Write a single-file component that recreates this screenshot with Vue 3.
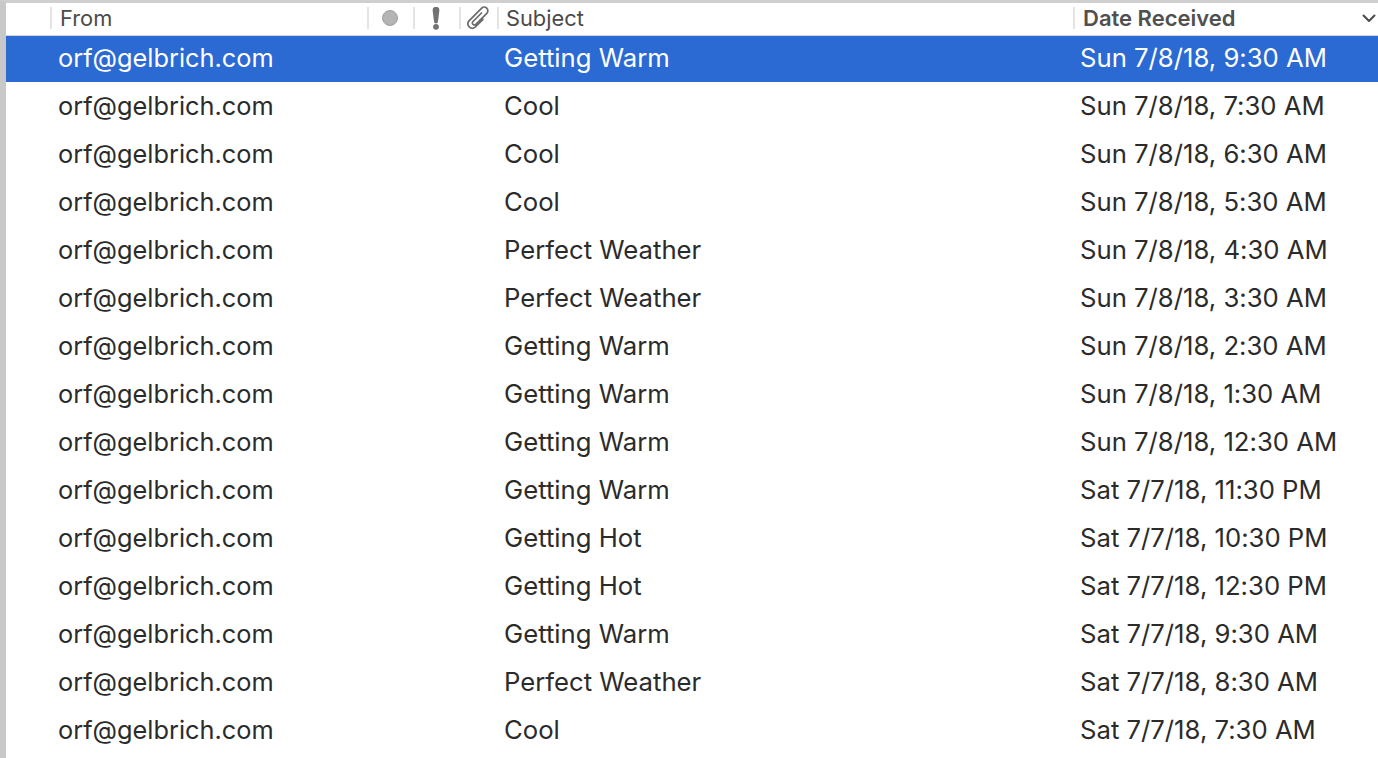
<script setup>
const rows = [
  ['Getting Warm', 'Sun 7/8/18, 9:30 AM'],
  ['Cool', 'Sun 7/8/18, 7:30 AM'],
  ['Cool', 'Sun 7/8/18, 6:30 AM'],
  ['Cool', 'Sun 7/8/18, 5:30 AM'],
  ['Perfect Weather', 'Sun 7/8/18, 4:30 AM'],
  ['Perfect Weather', 'Sun 7/8/18, 3:30 AM'],
  ['Getting Warm', 'Sun 7/8/18, 2:30 AM'],
  ['Getting Warm', 'Sun 7/8/18, 1:30 AM'],
  ['Getting Warm', 'Sun 7/8/18, 12:30 AM'],
  ['Getting Warm', 'Sat 7/7/18, 11:30 PM'],
  ['Getting Hot', 'Sat 7/7/18, 10:30 PM'],
  ['Getting Hot', 'Sat 7/7/18, 12:30 PM'],
  ['Getting Warm', 'Sat 7/7/18, 9:30 AM'],
  ['Perfect Weather', 'Sat 7/7/18, 8:30 AM'],
  ['Cool', 'Sat 7/7/18, 7:30 AM'],
];
</script>

<template>
  <div class="window">
    <div class="list">
      <div class="header">
        <div class="head-cell head-from">From</div>
        <div class="head-cell head-icon"><span class="dot"></span></div>
        <div class="head-cell head-icon head-flag">
          <svg width="10" height="23" viewBox="0 0 10 23">
            <path d="M1.600 3.200a3.400 3.400 0 0 1 6.800 0L7 14.400a2 2 0 0 1-4 0z" fill="#727272" />
            <circle cx="5" cy="19.800" r="2.900" fill="#727272" />
          </svg>
        </div>
        <div class="head-cell head-icon head-clip">
          <svg width="24" height="24" viewBox="0 0 24 24" fill="none" stroke="#6c6c6c" stroke-width="1.700" stroke-linecap="round">
            <path d="M15.500 7 6.800 15.700a2 2 0 0 0 2.800 2.800L20.800 7.300a3.600 3.600 0 0 0-5.100-5.100L3 14.900a4.400 4.400 0 0 0 6.200 6.200L17 13.300" />
          </svg>
        </div>
        <div class="head-cell head-subject">Subject</div>
        <div class="head-cell head-date">
          <span>Date Received</span>
          <svg width="14" height="9" viewBox="0 0 14 9" fill="none" stroke="#4a4a4a" stroke-width="2" stroke-linecap="round" stroke-linejoin="round">
            <path d="M1.500 1.500 7 7l5.500-5.500" />
          </svg>
        </div>
      </div>
      <div
        v-for="(row, i) in rows"
        :key="i"
        class="row"
        :class="{ selected: i === 0 }"
      >
        <span class="sender">orf@gelbrich.com</span>
        <span>{{ row[0] }}</span>
        <span>{{ row[1] }}</span>
      </div>
    </div>
  </div>
</template>

<style>
html, body {
  margin: 0;
  background: #fff;
  overflow: hidden;
}
</style>

<style scoped>
.window {
  height: 758px;
  box-sizing: border-box;
  border-top: 3px solid #cfcfcf;
  border-left: 6px solid #c8c8c8;
  font-family: Inter, "Liberation Sans", sans-serif;
  font-feature-settings: "calt" 0;
  overflow: hidden;
}

.header {
  display: grid;
  grid-template-columns: 44px 317px 46px 46px 38px 576px 1fr;
  height: 28px;
  padding-top: 4px;
  border-bottom: 1px solid #d4d4d4;
  align-items: start;
}

.head-cell {
  height: 22px;
  border-left: 2px solid #e4e4e4;
  display: flex;
  align-items: center;
  font-size: 21.8px;
  color: #4a4a4a;
  box-sizing: border-box;
}

.head-from {
  grid-column: 2;
  padding-left: 8px;
}

.head-icon {
  justify-content: center;
}

.head-flag svg {
  margin-left: -2px;
}

.head-clip svg {
  margin-left: -2px;
  flex: none;
}

.head-subject {
  padding-left: 7px;
}

.head-date {
  padding-left: 8px;
  padding-right: 2px;
  justify-content: space-between;
  font-weight: 600;
  font-size: 22px;
  color: #505050;
}

.dot {
  width: 16px;
  height: 16px;
  margin-left: -2px;
  border-radius: 50%;
  background: #b4b4b4;
  border: 1px solid #a0a0a0;
  box-sizing: border-box;
}

.row {
  display: grid;
  grid-template-columns: 446px 576px 1fr;
  box-sizing: border-box;
  padding-left: 52px;
  padding-bottom: 2px;
  height: 48px;
  align-items: center;
  font-size: 25.7px;
  color: #2b2b2b;
}

.sender {
  font-size: 25.35px;
}

.row.selected {
  height: 46px;
  padding-bottom: 4px;
  background: #2b6ad3;
  color: #fff;
}
</style>
